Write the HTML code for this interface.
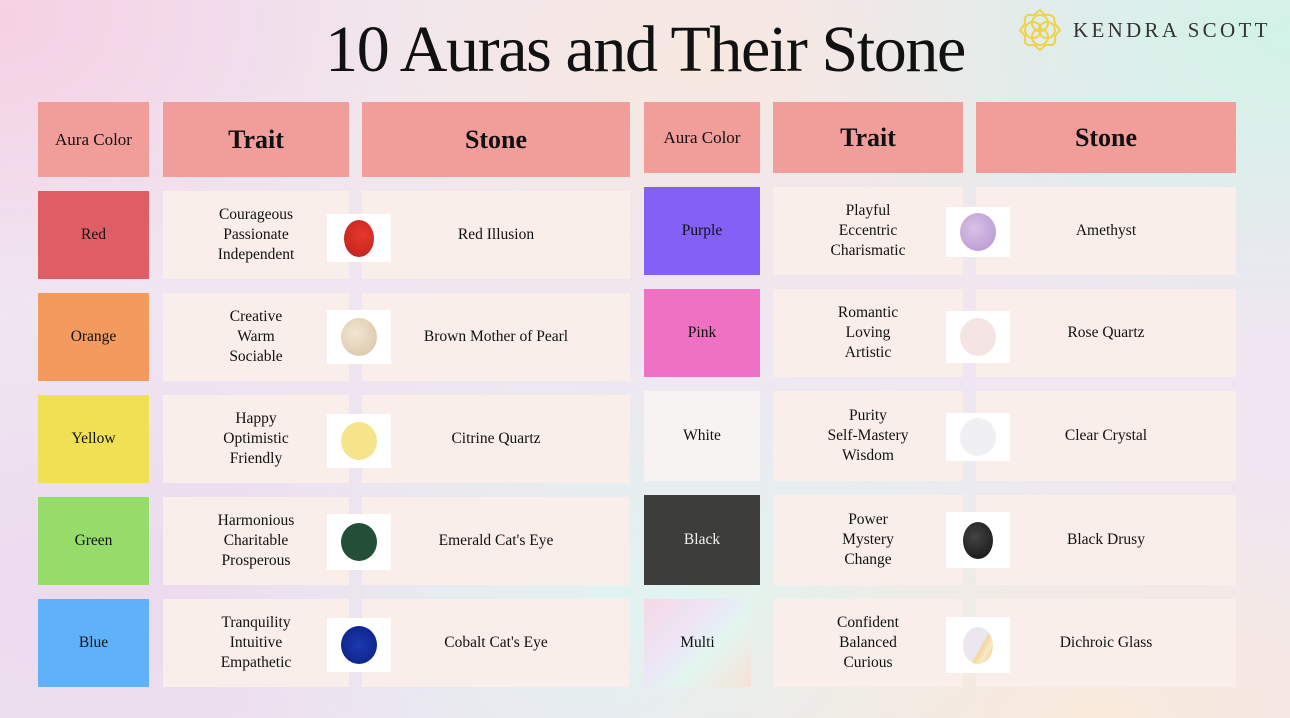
<!DOCTYPE html>
<html><head><meta charset="utf-8"><style>
*{margin:0;padding:0;box-sizing:border-box}
body{width:1290px;height:718px;overflow:hidden;position:relative;font-family:"Liberation Serif",serif;color:#111;
background:
radial-gradient(ellipse 400px 300px at 0px 20px,rgba(246,206,226,.9),transparent),
radial-gradient(ellipse 500px 300px at 1290px 40px,rgba(208,244,230,.95),transparent),
radial-gradient(ellipse 450px 300px at 700px 60px,rgba(248,232,222,.9),transparent),
radial-gradient(ellipse 500px 260px at 1100px 718px,rgba(250,234,218,.95),transparent),
radial-gradient(ellipse 500px 260px at 700px 600px,rgba(222,246,240,.9),transparent),
radial-gradient(ellipse 500px 300px at 100px 600px,rgba(236,216,238,.9),transparent),
#efe6f1;}
.b{position:absolute;display:flex;align-items:center;justify-content:center;text-align:center;font-size:15.5px;line-height:20px}
.h{background:#f19e9b}
.c{background:#f9eeea}
.img{position:absolute;background:#fff;display:flex;align-items:center;justify-content:center}
.img i{display:block;width:36px;height:38px;border-radius:50%}
.title{position:absolute;left:0;width:1290px;top:12px;text-align:center;font-size:66px;line-height:76px;letter-spacing:-1.4px}
</style></head><body>
<div class="title">10 Auras and Their Stone</div>
<svg style="position:absolute;left:1018px;top:8px" width="44" height="44" viewBox="0 0 44 44" fill="none" stroke="#eed34a" stroke-width="2">
<path d="M22 2 L27 7 Q34 6 36 10 L37 16 L42 22 L37 28 Q38 36 34 37 L28 37 L22 42 L16 37 Q8 38 7 34 L7 28 L2 22 L7 16 Q6 8 10 7 L16 7 Z"/>
<circle cx="22" cy="15" r="8"/><circle cx="22" cy="29" r="8"/><circle cx="15" cy="22" r="8"/><circle cx="29" cy="22" r="8"/>
</svg>
<div style="position:absolute;left:1073px;top:18px;font-size:21px;letter-spacing:3.3px;color:#333">KENDRA SCOTT</div>

<div class="b h" style="left:38px;top:102px;width:111px;height:75px;font-size:17px">Aura Color</div>
<div class="b h" style="left:163px;top:102px;width:186px;height:75px;font-size:26px;font-weight:bold">Trait</div>
<div class="b h" style="left:362px;top:102px;width:268px;height:75px;font-size:26px;font-weight:bold">Stone</div>
<div class="b h" style="left:644px;top:102px;width:116px;height:71px;font-size:17px">Aura Color</div>
<div class="b h" style="left:773px;top:102px;width:190px;height:71px;font-size:26px;font-weight:bold">Trait</div>
<div class="b h" style="left:976px;top:102px;width:260px;height:71px;font-size:26px;font-weight:bold">Stone</div>

<div class="b" style="left:38px;top:191px;width:111px;height:88px;background:#df5e66">Red</div>
<div class="b c" style="left:163px;top:191px;width:186px;height:88px">Courageous<br>Passionate<br>Independent</div>
<div class="b c" style="left:362px;top:191px;width:268px;height:88px">Red Illusion</div>
<div class="img" style="left:327px;top:214px;width:64px;height:48px"><i style="width:30px;height:37px;background:radial-gradient(circle at 60% 40%,#e8382c,#b8201c)"></i></div>

<div class="b" style="left:38px;top:293px;width:111px;height:88px;background:#f39a5e">Orange</div>
<div class="b c" style="left:163px;top:293px;width:186px;height:88px">Creative<br>Warm<br>Sociable</div>
<div class="b c" style="left:362px;top:293px;width:268px;height:88px">Brown Mother of Pearl</div>
<div class="img" style="left:327px;top:310px;width:64px;height:54px"><i style="background:radial-gradient(circle at 40% 40%,#f2e6d2,#d6c2a2)"></i></div>

<div class="b" style="left:38px;top:395px;width:111px;height:88px;background:#f0e054">Yellow</div>
<div class="b c" style="left:163px;top:395px;width:186px;height:88px">Happy<br>Optimistic<br>Friendly</div>
<div class="b c" style="left:362px;top:395px;width:268px;height:88px">Citrine Quartz</div>
<div class="img" style="left:327px;top:414px;width:64px;height:54px"><i style="background:#f5e48a"></i></div>

<div class="b" style="left:38px;top:497px;width:111px;height:88px;background:#96dc6a">Green</div>
<div class="b c" style="left:163px;top:497px;width:186px;height:88px">Harmonious<br>Charitable<br>Prosperous</div>
<div class="b c" style="left:362px;top:497px;width:268px;height:88px">Emerald Cat's Eye</div>
<div class="img" style="left:327px;top:514px;width:64px;height:56px"><i style="background:#24503a"></i></div>

<div class="b" style="left:38px;top:599px;width:111px;height:88px;background:#5fb2f9">Blue</div>
<div class="b c" style="left:163px;top:599px;width:186px;height:88px">Tranquility<br>Intuitive<br>Empathetic</div>
<div class="b c" style="left:362px;top:599px;width:268px;height:88px">Cobalt Cat's Eye</div>
<div class="img" style="left:327px;top:618px;width:64px;height:54px"><i style="background:radial-gradient(circle,#1a3ab0,#0a1e80)"></i></div>

<div class="b" style="left:644px;top:187px;width:116px;height:88px;background:#8460f7">Purple</div>
<div class="b c" style="left:773px;top:187px;width:190px;height:88px">Playful<br>Eccentric<br>Charismatic</div>
<div class="b c" style="left:976px;top:187px;width:260px;height:88px">Amethyst</div>
<div class="img" style="left:946px;top:207px;width:64px;height:50px"><i style="background:radial-gradient(circle at 40% 40%,#d8c2e6,#b592d0)"></i></div>

<div class="b" style="left:644px;top:289px;width:116px;height:88px;background:#ee71c4">Pink</div>
<div class="b c" style="left:773px;top:289px;width:190px;height:88px">Romantic<br>Loving<br>Artistic</div>
<div class="b c" style="left:976px;top:289px;width:260px;height:88px">Rose Quartz</div>
<div class="img" style="left:946px;top:311px;width:64px;height:52px"><i style="background:#f5e4e4"></i></div>

<div class="b" style="left:644px;top:391px;width:116px;height:90px;background:#f6f3f2">White</div>
<div class="b c" style="left:773px;top:391px;width:190px;height:90px">Purity<br>Self-Mastery<br>Wisdom</div>
<div class="b c" style="left:976px;top:391px;width:260px;height:90px">Clear Crystal</div>
<div class="img" style="left:946px;top:413px;width:64px;height:48px"><i style="background:#f0eff2"></i></div>

<div class="b" style="left:644px;top:495px;width:116px;height:90px;background:#3d3d3b;color:#f2f2f2">Black</div>
<div class="b c" style="left:773px;top:495px;width:190px;height:90px">Power<br>Mystery<br>Change</div>
<div class="b c" style="left:976px;top:495px;width:260px;height:90px">Black Drusy</div>
<div class="img" style="left:946px;top:512px;width:64px;height:56px"><i style="width:30px;height:37px;background:radial-gradient(circle at 40% 40%,#444,#111)"></i></div>

<div class="b" style="left:644px;top:599px;width:107px;height:88px;background:linear-gradient(135deg,#f6d8e6,#ece6f6 40%,#e2f6f0 60%,#f8e2d6);">Multi</div>
<div class="b c" style="left:773px;top:599px;width:190px;height:88px">Confident<br>Balanced<br>Curious</div>
<div class="b c" style="left:976px;top:599px;width:260px;height:88px">Dichroic Glass</div>
<div class="img" style="left:946px;top:617px;width:64px;height:56px"><i style="width:30px;height:37px;background:linear-gradient(120deg,#ece6f0 55%,#f4d898 60%,#f8eacc 75%,#e6c060)"></i></div>
</body></html>
